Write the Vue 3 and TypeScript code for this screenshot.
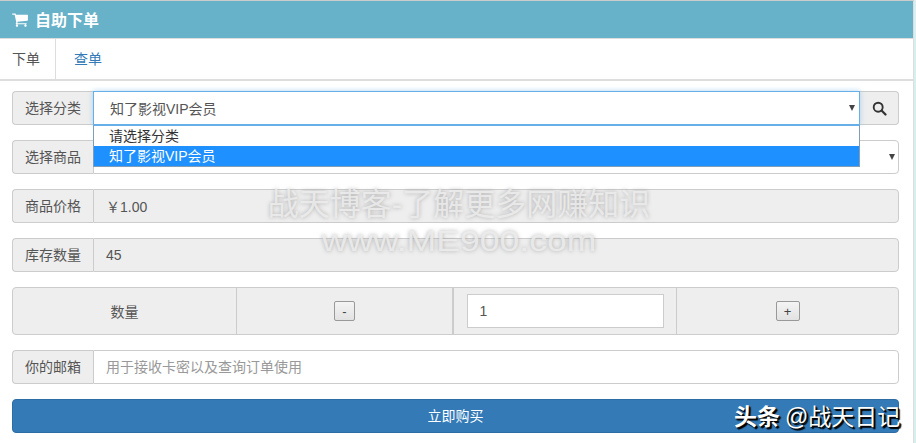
<script setup lang="ts">
const options: string[] = ['请选择分类', '知了影视VIP会员']
</script>

<template>
  <div class="page">
    <div class="panel">
      <div class="head">
        <svg class="cart" viewBox="0 0 1664 1792" width="16" height="17"><path fill="#fff" d="M640 1536q0 52-38 90t-90 38-90-38-38-90 38-90 90-38 90 38 38 90zm896 0q0 52-38 90t-90 38-90-38-38-90 38-90 90-38 90 38 38 90zm128-1088v512q0 24-16.500 42.500t-40.500 21.500l-1044 122q13 60 13 70 0 16-24 64h920q26 0 45 19t19 45-19 45-45 19h-1024q-26 0-45-19t-19-45q0-11 8-31.500t16-36 21.500-40 15.500-29.500l-177-823h-204q-26 0-45-19t-19-45 19-45 45-19h256q16 0 28.500 6.500t19.500 15.500 13 24.500 8 26 5.500 29.500 4.500 26h1201q26 0 45 19t19 45z"/></svg>
        <span>自助下单</span>
      </div>
      <div class="tabs">
        <div class="tab active">下单</div>
        <div class="tab link">查单</div>
      </div>
      <div class="body">
        <div class="row">
          <div class="addon">选择分类</div>
          <div class="selectwrap">
            <div class="select focus">
              <span class="val">知了影视VIP会员</span>
              <i class="caret"></i>
            </div>
            <ul class="drop">
              <li v-for="(o, i) in options" :key="o" :class="{ sel: i === 1 }">{{ o }}</li>
            </ul>
          </div>
          <div class="addon search">
            <svg viewBox="0 0 16 16" width="15" height="15"><circle cx="6.600" cy="6.600" r="4.800" fill="none" stroke="#333" stroke-width="2"/><path d="M10.200 10.200 14.400 14.400" stroke="#333" stroke-width="2.400" stroke-linecap="round"/></svg>
          </div>
        </div>
        <div class="row">
          <div class="addon">选择商品</div>
          <div class="select end"><i class="caret"></i></div>
        </div>
        <div class="row">
          <div class="addon">商品价格</div>
          <div class="readonly">￥1.00</div>
        </div>
        <div class="row">
          <div class="addon">库存数量</div>
          <div class="readonly">45</div>
        </div>
        <div class="qty">
          <div class="cell">数量</div>
          <div class="cell"><button class="mini">-</button></div>
          <div class="cell"><input class="num" value="1" /></div>
          <div class="cell"><button class="mini plus">+</button></div>
        </div>
        <div class="row">
          <div class="addon">你的邮箱</div>
          <input class="email" placeholder="用于接收卡密以及查询订单使用" />
        </div>
        <button class="buy">立即购买</button>
      </div>
      <div class="mark">
        <div class="m1">战天博客-了解更多网赚知识</div>
        <div class="m2">www.ME900.com</div>
      </div>
      <div class="brand"><b>头条</b><span class="at">@战天日记</span></div>
    </div>
  </div>
</template>

<style>
html, body { margin: 0; background: #fff; overflow: hidden; }
</style>

<style scoped>
.page {
  width: 916px;
  height: 443px;
  overflow: hidden;
  background: #d9eeee;
  font-family: "Liberation Sans", "Noto Sans CJK SC", sans-serif;
  font-size: 14px;
  color: #555;
}
.panel {
  position: relative;
  width: 913px;
  height: 442px;
  background: #fff;
  border-right: 1px solid #ddd;
  border-top: 1px solid #ccc;
  box-sizing: content-box;
}
.head {
  height: 35px;
  padding-bottom: 2px;
  background: #67b1c9;
  color: #fff;
  font-size: 16px;
  font-weight: 700;
  display: flex;
  align-items: center;
  padding-left: 12px;
  gap: 7px;
}
.cart { margin-top: 1px; }
.tabs {
  display: flex;
  height: 40px;
  border-top: 1px solid #ddd;
  border-bottom: 2px solid #ddd;
  box-sizing: content-box;
  margin-bottom: 10px;
}
.tab {
  padding: 0 15px 0 12px;
  line-height: 40px;
  font-size: 14px;
  color: #555;
}
.tab.active { border-right: 1px solid #ddd; }
.tab.link { color: #337ab7; padding-left: 18px; }
.body {
  padding: 0 14px 0 12px;
  display: flex;
  flex-direction: column;
  gap: 15px;
}
.row {
  display: flex;
  height: 34px;
}
.addon {
  width: 81px;
  flex: none;
  height: 34px;
  box-sizing: border-box;
  background: #eee;
  border: 1px solid #ccc;
  border-radius: 4px 0 0 4px;
  border-right: none;
  display: flex;
  align-items: center;
  justify-content: center;
  padding-bottom: 2px;
}
.selectwrap { position: relative; flex: 1; }
.select {
  height: 34px;
  box-sizing: border-box;
  border: 1px solid #ccc;
  background: #fff;
  position: relative;
  display: flex;
  align-items: center;
  padding-left: 16px;
}
.select.focus {
  border-color: #66afe9;
  box-shadow: 0 0 5px rgba(102, 175, 233, 0.5);
  z-index: 1;
}
.select.end {
  flex: 1;
  border-radius: 0 4px 4px 0;
}
.caret {
  position: absolute;
  right: 3.500px;
  top: 13px;
  width: 0;
  height: 0;
  border-left: 3.500px solid transparent;
  border-right: 3.500px solid transparent;
  border-top: 6px solid #444;
}
.select.focus .caret { right: 4px; }
.drop {
  position: absolute;
  z-index: 3;
  left: 0;
  right: 0;
  top: 34px;
  margin: 0;
  padding: 0;
  list-style: none;
  background: #fff;
  border: 1px solid #7f9db9;
  border-top-color: #66afe9;
  color: #333;
}
.drop li {
  height: 20px;
  line-height: 20px;
  padding-left: 15px;
}
.drop li.sel {
  background: #1e90ff;
  color: #fff;
}
.search {
  width: 39px;
  border-radius: 0 4px 4px 0;
  border: 1px solid #ccc;
  border-left: none;
  padding-bottom: 0;
}
.readonly {
  flex: 1;
  background: #eee;
  border: 1px solid #ccc;
  border-radius: 0 4px 4px 0;
  box-sizing: border-box;
  display: flex;
  align-items: center;
  padding-left: 12px;
  padding-bottom: 1px;
}
.qty {
  display: grid;
  grid-template-columns: 224px 217px 223px 1fr;
  height: 48px;
  box-sizing: border-box;
  background: #eee;
  border: 1px solid #ccc;
  border-radius: 4px;
}
.cell {
  display: flex;
  align-items: center;
  justify-content: center;
  border-right: 1px solid #ccc;
}
.cell:nth-child(2) { border-right-width: 2px; }
.cell:last-child { border-right: none; }
.mini {
  width: 21px;
  height: 20px;
  padding: 0;
  box-sizing: border-box;
  border: 1px solid #999;
  border-radius: 2px;
  background: linear-gradient(#f4f4f4, #e2e2e2);
  color: #444;
  font: 13px/1 "Liberation Sans", sans-serif;
}
.mini.plus { width: 24px; }
.num {
  width: 197px;
  height: 34px;
  box-sizing: border-box;
  border: 1px solid #ccc;
  padding: 0 12px;
  font: 14px "Liberation Sans", sans-serif;
  color: #555;
  outline: none;
  background: #fff;
}
.email {
  flex: 1;
  min-width: 0;
  box-sizing: border-box;
  height: 34px;
  border: 1px solid #ccc;
  border-radius: 0 4px 4px 0;
  padding: 0 12px 1px;
  font: 14px "Liberation Sans", "Noto Sans CJK SC", sans-serif;
  outline: none;
}
.email::placeholder { color: #999; opacity: 1; }
.buy {
  height: 34px;
  border: 1px solid #2e6da4;
  border-radius: 4px;
  background: #337ab7;
  color: #fff;
  font: 14px "Liberation Sans", "Noto Sans CJK SC", sans-serif;
  padding: 0 0 3px;
}
.mark {
  position: absolute;
  z-index: 4;
  left: 1px;
  width: 916px;
  top: 183px;
  text-align: center;
  color: rgba(238, 238, 238, 0.85);
  text-shadow: 0 0 4px rgba(150, 150, 150, 0.75);
  pointer-events: none;
}
.m1 { font-size: 31px; line-height: 42px; }
.m2 { font-size: 30px; line-height: 30px; transform: scaleX(1.185); }
.brand {
  position: absolute;
  z-index: 5;
  left: 734px;
  top: 402px;
  font-size: 23px;
  line-height: 28px;
  color: #fff;
  white-space: nowrap;
  text-shadow: 1px 1px 1px #000, 2px 2px 1px #000;
}
.at { margin-left: 5px; }
</style>
